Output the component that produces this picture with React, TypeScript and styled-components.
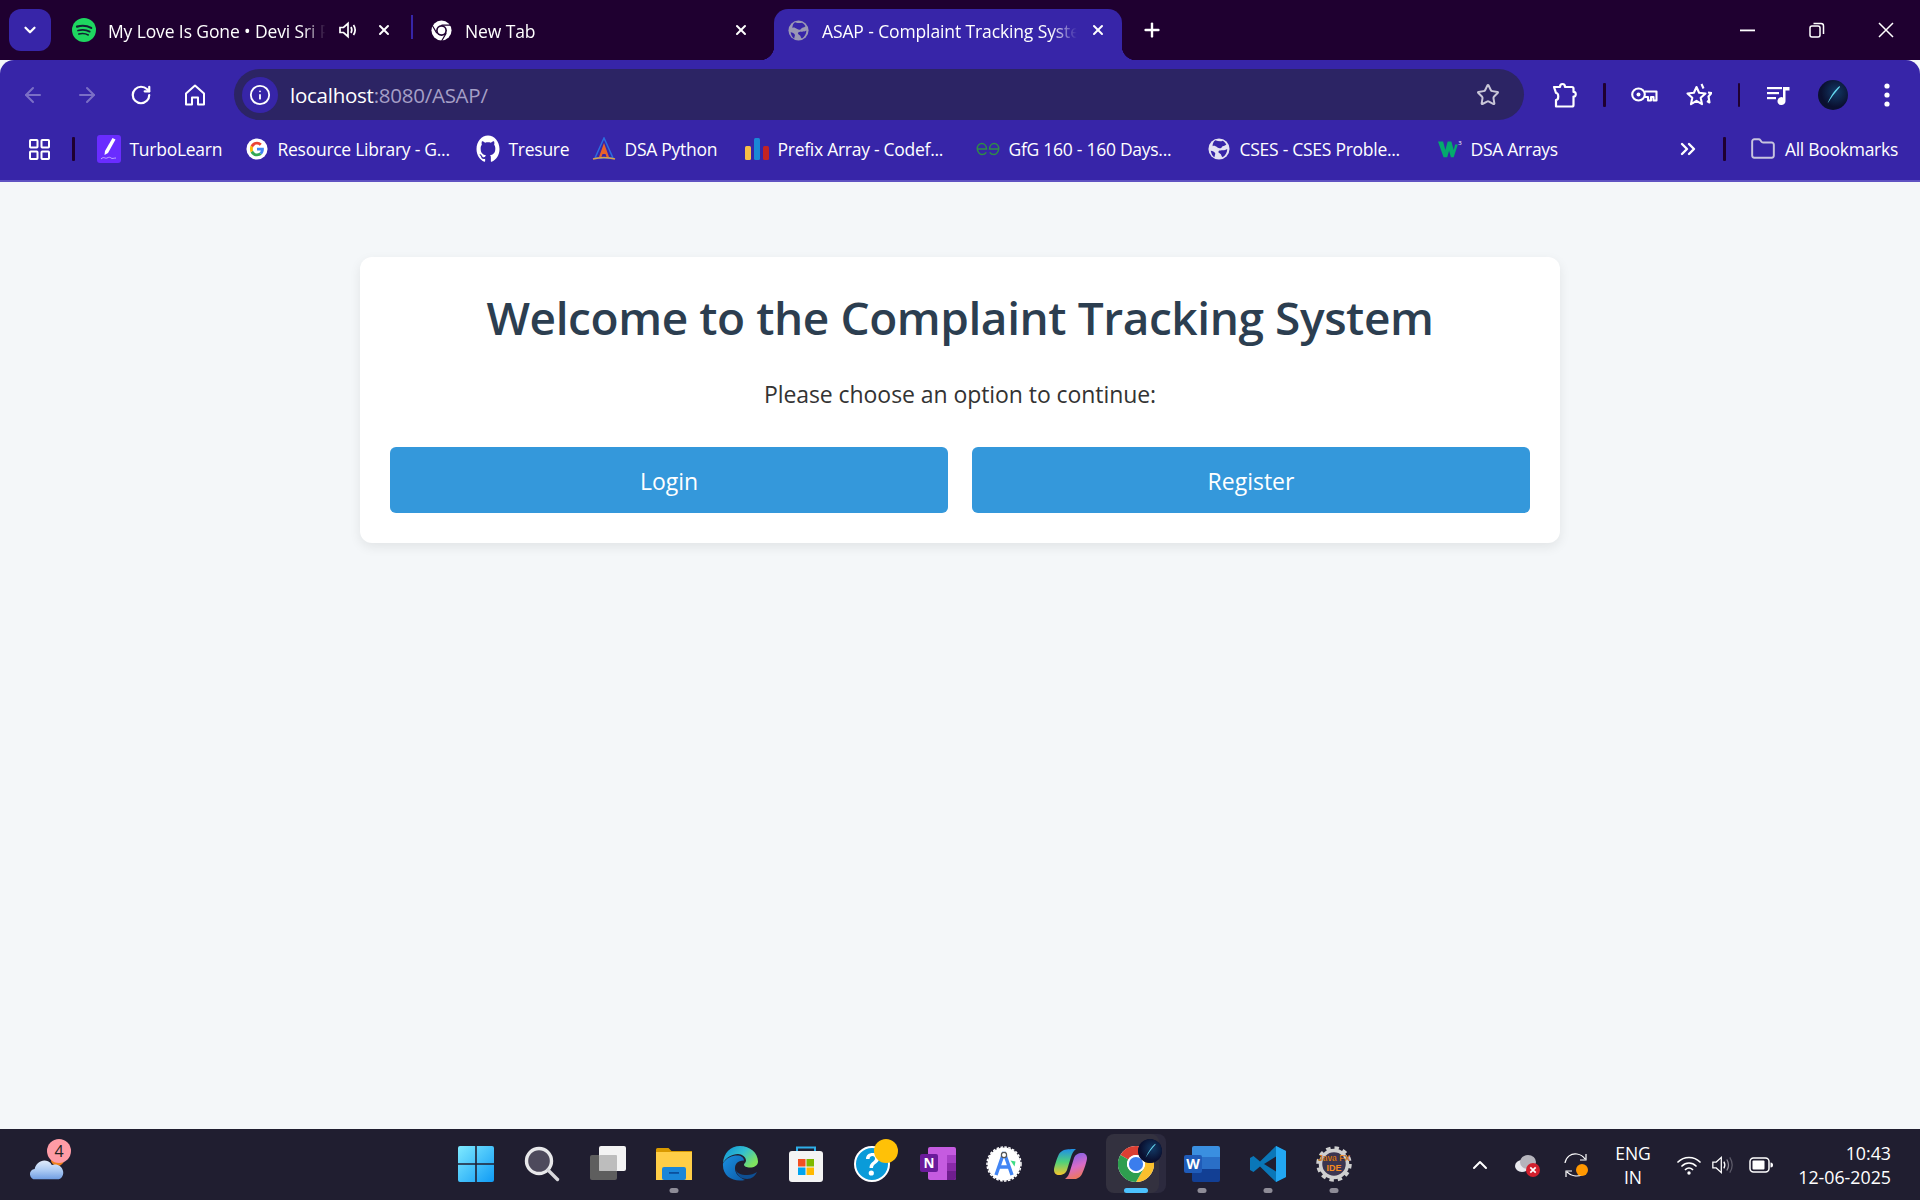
import React from "react";
import styled, { createGlobalStyle } from "styled-components";
import { ArrowLeft, ArrowRight, RotateCw, Info, Star, X, Plus, ChevronDown, ChevronUp, ChevronsRight, Folder } from "lucide-react";

const Global = createGlobalStyle`
  html, body { margin: 0; padding: 0; height: 100%; }
  body { font-family: "Open Sans", "Noto Sans", "Liberation Sans", sans-serif; background: #f4f7f9; }
  * { box-sizing: border-box; }
`;

const Shell = styled.div`display:flex;flex-direction:column;height:100vh;overflow:hidden;`;
const TabStrip = styled.div`display:flex;align-items:flex-end;height:60px;background:#1f0030;padding-left:9px;position:relative;`;
const MenuButton = styled.div`width:42px;height:42px;margin:0 9px 9px 0;border-radius:12px;background:#3725a8;color:#fff;display:flex;align-items:center;justify-content:center;`;
const Tab = styled.div<{ $active?: boolean; $pad?: number }>`
  position:relative;width:348px;height:51px;display:flex;align-items:center;padding:0 16px 9px ${p => p.$pad ?? 14}px;color:#fff;
  background:${p => (p.$active ? "#3725a8" : "transparent")};border-radius:14px 14px 0 0;
  ${p => p.$active && `margin-left:9px;
    &::before,&::after{content:"";position:absolute;bottom:0;width:14px;height:14px;}
    &::before{left:-14px;background:radial-gradient(circle at 0 0,transparent 14px,#3725a8 14.5px);}
    &::after{right:-14px;background:radial-gradient(circle at 100% 0,transparent 14px,#3725a8 14.5px);}
  `}
`;
const TabTitle = styled.span<{ $gap?: number }>`flex:1;min-width:0;margin-left:${p => p.$gap ?? 13}px;padding-top:2px;font-size:17.5px;letter-spacing:-.12px;white-space:nowrap;overflow:hidden;
  -webkit-mask-image:linear-gradient(90deg,#000 88%,transparent 98%);mask-image:linear-gradient(90deg,#000 88%,transparent 98%);`;
const TabClose = styled.span`width:16px;height:16px;display:flex;align-items:center;justify-content:center;margin-left:8px;`;
const TabAudio = styled.span`display:flex;margin:0 10px 0 8px;`;
const TabDivider = styled.span`width:2px;height:24px;margin:0 4px 21px 3px;background:#3725a8;`;
const NewTab = styled.span`width:30px;height:30px;margin:0 0 15px 15px;display:flex;align-items:center;justify-content:center;color:#fff;`;
const WindowControls = styled.div`display:flex;margin-left:auto;align-self:stretch;`;
const WindowButton = styled.span`width:69px;display:flex;align-items:center;justify-content:center;color:#fff;`;

const Toolbar = styled.div`display:flex;align-items:center;height:60px;background:#3725a8;padding:9px 6px 0;border-radius:14px 14px 0 0;position:relative;`;
const ToolCell = styled.span<{ $dim?: boolean }>`width:54px;height:40px;flex:none;display:flex;align-items:center;justify-content:center;color:${p => (p.$dim ? "#7b6fc6" : "#fff")};`;
const Omnibox = styled.div`flex:1;margin:0 13px 0 12px;height:51px;border-radius:26px;background:#2c2464;display:flex;align-items:center;padding:0 24px 0 8px;`;
const InfoChip = styled.span`width:36px;height:36px;border-radius:50%;background:#3725a8;color:#fff;display:flex;align-items:center;justify-content:center;`;
const Url = styled.span`flex:1;margin-left:12px;font-size:20.5px;letter-spacing:-.25px;color:#fff;`;
const UrlMuted = styled.span`color:#a59fc6;`;
const VBar = styled.span`width:2.5px;height:24px;flex:none;margin:0 12px;background:#1f0030;border-radius:1px;`;

const BookmarkBar = styled.div`display:flex;align-items:center;height:62px;background:#3725a8;padding:0 0 2px 27px;border-bottom:2px solid #5f52c2;color:#fff;`;
const AppsCell = styled.span`width:24px;display:flex;justify-content:center;`;
const BookmarkBarGap = styled.span`width:2.5px;height:24px;flex:none;margin:0 22px 0 21px;background:#1f0030;border-radius:1px;`;
const Bookmark = styled.div<{ $w: number }>`width:${p => p.$w}px;flex:none;display:flex;align-items:center;gap:9px;font-size:17.5px;letter-spacing:-.27px;white-space:nowrap;`;
const BookmarkIcon = styled.span`width:24px;height:24px;flex:none;display:flex;align-items:center;justify-content:center;`;
const BookmarkEnd = styled.div`margin-left:auto;display:flex;align-items:center;padding-right:22px;`;
const MoreCell = styled.span`display:flex;margin-right:2px;`;
const FolderCell = styled.span`display:flex;margin-left:2px;`;
const AllBookmarks = styled.span`font-size:17.5px;letter-spacing:-.27px;margin-left:9px;white-space:nowrap;`;

const Main = styled.main`flex:1;display:flex;justify-content:center;align-items:flex-start;padding-top:75px;background:#f4f7f9;`;
const Card = styled.section`width:1200px;padding:30px;background:#fff;border-radius:12px;box-shadow:0 4px 12px rgba(0,0,0,.08);text-align:center;`;
const Title = styled.h1`margin:0;height:62px;line-height:60px;font-size:46px;font-weight:600;letter-spacing:-.42px;color:#2c3e50;`;
const Subtitle = styled.p`margin:31px 0 37px;line-height:28px;height:30px;font-size:23px;letter-spacing:-.07px;color:#333;`;
const ButtonRow = styled.div`display:flex;gap:24px;`;
const ActionButton = styled.button`flex:1;height:66px;padding:2px 0 0;border:0;border-radius:6px;background:#3498db;color:#fff;font:400 23px "Open Sans",sans-serif;`;

const Taskbar = styled.footer`height:71px;display:flex;align-items:center;background:#201e30;color:#fff;flex:none;`;
const WeatherArea = styled.div`width:443px;flex:none;padding-left:29px;display:flex;`;
const WeatherIcon = styled.span`position:relative;width:40px;height:36px;display:block;margin-top:10px;`;
const CountBadge = styled.span`position:absolute;left:18px;top:-13px;width:24px;height:24px;border-radius:50%;background:#ff9ca6;color:#222;font-size:16px;line-height:24px;text-align:center;`;
const AppRow = styled.div`display:flex;align-items:stretch;height:71px;`;
const AppCell = styled.span`position:relative;width:66px;padding-bottom:2px;display:flex;align-items:center;justify-content:center;`;
const ActiveBack = styled.span`position:absolute;left:7px;top:5px;width:56px;height:59px;border-radius:8px;background:#2c2a3e;`;
const ActiveFront = styled.span`position:absolute;left:3px;top:5px;width:53px;height:59px;border-radius:8px;background:#33313f;`;
const AppGlyph = styled.span`position:relative;display:flex;`;
const Pill = styled.span<{ $on?: boolean }>`position:absolute;left:50%;transform:translateX(-50%);bottom:7px;height:5px;border-radius:3px;width:${p => (p.$on ? 24 : 9)}px;background:${p => (p.$on ? "#4cc2ff" : "#8e8c97")};`;
const Dot = styled.span<{ $c: string }>`position:absolute;left:35px;top:10px;width:24px;height:24px;border-radius:50%;background:${p => p.$c};overflow:hidden;display:flex;`;
const Tray = styled.div`margin-left:auto;display:flex;align-items:center;color:#fff;padding-right:29px;`;
const TrayIcon = styled.span<{ $w: number }>`width:${p => p.$w}px;display:flex;justify-content:center;flex:none;`;
const Lang = styled.div`width:66px;flex:none;text-align:center;font-size:17.5px;line-height:24px;letter-spacing:-.1px;`;
const Clock = styled.div`width:103px;flex:none;text-align:right;font-size:17.8px;line-height:24px;white-space:nowrap;`;

const Spotify = () => (<svg width="24" height="24" viewBox="0 0 24 24"><circle cx="12" cy="12" r="12" fill="#1ed760"/><g fill="none" stroke="#123" strokeLinecap="round"><path d="M5 8.600c5-1.400 10-1 14.200 1.300" strokeWidth="2.200"/><path d="M6 12.500c4-1.100 8.500-.7 11.700 1.100" strokeWidth="1.800"/><path d="M6.800 16c3.300-.8 6.800-.5 9.500 1" strokeWidth="1.500"/></g></svg>);
const ChromeMono = () => (<svg width="21" height="21" viewBox="0 0 24 24"><circle cx="12" cy="12" r="11.500" fill="#fff"/><circle cx="12" cy="12" r="6.200" fill="#1f0030"/><circle cx="12" cy="12" r="4.300" fill="#fff"/><path d="M12 5.800h10.500M6.600 15l-5.300-9M17.400 15l-5.300 9" stroke="#1f0030" strokeWidth="1.300"/></svg>);
const Globe = ({ c = "#9a98b4", l = "#3725a8", s = 21 }: { c?: string; l?: string; s?: number }) => (<svg width={s} height={s} viewBox="0 0 24 24"><circle cx="12" cy="12" r="11.500" fill={c}/><path d="M8 2.500c3 1 6 1.500 8 .5 2 1 3 2.500 4 4-2 2-4 1-5 3s-3 1-5 0-3-2-5-1c0-3 1-5 3-6.500zM12 14c2-1 6 0 9-2 0 4-2 7-5 9-2-1-1-3-3-4s-2-2-1-3zM3 14c2 0 4 1 5 3l-1 4c-2-1-3.500-4-4-7z" fill={l}/></svg>);
const Speaker = () => (<svg width="20" height="20" viewBox="0 0 20 20" fill="none" stroke="#fff" strokeWidth="1.700"><path d="M2 7.500h3.500L10 3.500v13l-4.500-4H2z"/><path d="M13 7c1 1.800 1 4.200 0 6M15.500 5c2 3 2 7 0 10"/></svg>);
const Minimize = () => (<svg width="16" height="3"><rect width="15" height="1.800" y=".5" fill="#fff"/></svg>);
const Restore = () => (<svg width="16" height="16" viewBox="0 0 16 16" fill="none" stroke="#fff" strokeWidth="1.500"><rect x="1" y="4" width="10" height="11" rx="2"/><path d="M4.500 1.500h7.500a2.500 2.500 0 0 1 2.500 2.500v8"/></svg>);
const CloseX = () => (<svg width="16" height="16" viewBox="0 0 16 16" stroke="#fff" strokeWidth="1.500"><path d="M1 1l14 14M15 1L1 15"/></svg>);
const HomeIcon = () => (<svg width="22" height="24" viewBox="0 0 22 24" fill="none" stroke="#fff" strokeWidth="2" strokeLinejoin="round"><path d="M2 10.500L11 2.500l9 8V21.500h-6v-7h-6v7H2z"/></svg>);
const PuzzleIcon = () => (<svg width="26" height="26" viewBox="0 0 26 26" fill="none" stroke="#fff" strokeWidth="2.200" strokeLinejoin="round"><path d="M3 5h6c0-4 5-4 5 0h7a1.500 1.500 0 0 1 1.500 1.500V10c3-.5 3 5 0 4.500V23a1.500 1.500 0 0 1-1.500 1.500H5V18c3 0 3-7 0-7z"/></svg>);
const KeyIcon = () => (<svg width="27" height="15" viewBox="0 0 27 15" fill="none" stroke="#fff" strokeWidth="2.100" strokeLinejoin="round"><ellipse cx="7.500" cy="7.500" rx="6.300" ry="6"/><circle cx="7.500" cy="7.500" r="2" fill="#fff" stroke="none"/><path d="M13.800 4.500H25.500v9h-3v-3.500h-2.500v3.500h-3v-3.500h-3.200"/></svg>);
const StarsIcon = () => (<svg width="26" height="26" viewBox="0 0 26 26" fill="none" stroke="#fff" strokeWidth="2.100" strokeLinejoin="round"><path d="M10.500 5l2.600 5.800 6.400.7-4.800 4.300 1.300 6.300-5.500-3.200-5.500 3.200 1.300-6.300L1.500 11.500l6.400-.7z"/><path d="M15.500 2l2 4.500M22 10.500l3.500.5-3 3.500 1 6-2.500-1.500"/></svg>);
const QueueIcon = () => (<svg width="24" height="22" viewBox="0 0 24 22" fill="#fff"><rect x="0" y="3" width="15" height="2.200"/><rect x="0" y="8" width="12" height="2.200"/><rect x="0" y="13" width="9" height="2.200"/><path d="M16 3h6.500v3.500H18.500V17a4 4 0 1 1-2.500-3.600z"/></svg>);
const Avatar = ({ s = 30 }: { s?: number }) => (<svg width={s} height={s} viewBox="0 0 30 30"><defs><radialGradient id="av" cx=".6" cy=".4"><stop offset="0" stopColor="#123a66"/><stop offset="1" stopColor="#0a1030"/></radialGradient></defs><circle cx="15" cy="15" r="15" fill="url(#av)"/><path d="M21.500 6C17 10 13 15 9.500 23.500 13 18 17 12.500 22 7z" fill="#66d9f0"/></svg>);
const Dots = () => (<svg width="6" height="24" viewBox="0 0 6 24" fill="#fff"><circle cx="3" cy="3" r="2.600"/><circle cx="3" cy="12" r="2.600"/><circle cx="3" cy="21" r="2.600"/></svg>);
const AppsIcon = () => (<svg width="21" height="21" viewBox="0 0 21 21" fill="none" stroke="#fff" strokeWidth="2"><rect x="1" y="1" width="7.500" height="7.500" rx=".7"/><rect x="12.500" y="1" width="7.500" height="7.500" rx=".7"/><rect x="1" y="12.500" width="7.500" height="7.500" rx=".7"/><rect x="12.500" y="12.500" width="7.500" height="7.500" rx=".7"/></svg>);
const Turbo = () => (<svg width="24" height="28" viewBox="0 0 24 28"><rect width="24" height="28" rx="3" fill="#6a2cff"/><path d="M15.500 3l3 1.500L11 18l-3.500 2 .5-4z" fill="#fff"/><path d="M4 24c3-3 4 0 6-1s3-1 4 0 3 0 5 0" stroke="#c9b3ff" fill="none" strokeWidth=".9"/></svg>);
const GoogleG = () => (<svg width="22" height="24" viewBox="0 0 24 24"><circle cx="12" cy="12" r="11.500" fill="#fff"/><path d="M19.500 12.200c0-.6 0-1.100-.1-1.600H12v3h4.200a3.600 3.600 0 0 1-1.600 2.400l2.500 2c1.500-1.400 2.400-3.400 2.400-5.800z" fill="#4285f4"/><path d="M12 20c2.100 0 3.900-.7 5.100-1.900l-2.500-2c-.7.500-1.600.8-2.600.8-2 0-3.700-1.400-4.300-3.200L5.100 15.700C6.400 18.300 9 20 12 20z" fill="#34a853"/><path d="M7.700 13.700c-.3-1-.3-2.400 0-3.400L5.100 8.300c-1 1.900-1 5.500 0 7.400z" fill="#fbbc05"/><path d="M12 7.200c1.100 0 2.200.4 3 1.200l2.200-2.200C15.800 4.800 13.900 4 12 4 9 4 6.400 5.700 5.100 8.300l2.600 2c.6-1.800 2.300-3.100 4.300-3.100z" fill="#ea4335"/></svg>);
const Github = () => (<svg width="24" height="28" viewBox="0 0 24 24" fill="#fff" preserveAspectRatio="none"><path d="M12 .5C5.650.5.500 5.650.500 12c0 5.080 3.290 9.390 7.860 10.910.57.110.78-.25.78-.55v-2.030c-3.200.7-3.870-1.360-3.870-1.360-.52-1.330-1.280-1.680-1.280-1.680-1.040-.71.080-.7.080-.7 1.150.08 1.760 1.180 1.760 1.180 1.030 1.750 2.690 1.250 3.340.95.100-.74.400-1.250.730-1.540-2.550-.29-5.240-1.280-5.240-5.690 0-1.260.45-2.280 1.180-3.090-.12-.29-.51-1.460.11-3.040 0 0 .97-.31 3.160 1.180.92-.26 1.900-.38 2.880-.39.98 0 1.960.13 2.880.39 2.190-1.490 3.160-1.180 3.160-1.180.62 1.580.23 2.750.11 3.040.74.810 1.180 1.830 1.180 3.090 0 4.420-2.690 5.390-5.250 5.680.41.360.78 1.050.78 2.120v3.140c0 .3.210.66.790.55C20.210 21.390 23.500 17.080 23.500 12 23.500 5.650 18.350.5 12 .5z"/></svg>);
const DsaLogo = () => (<svg width="24" height="24" viewBox="0 0 24 24"><path d="M12 1L3 21h18z" fill="none" stroke="#2b6de0" strokeWidth="1.500"/><path d="M12 6l-5 14h2.500l1-3h3l1 3H17z" fill="#e8622a"/><path d="M1 22c7-2 15-2 22 0" stroke="#d8a24a" strokeWidth="1.500" fill="none"/></svg>);
const BarsLogo = () => (<svg width="24" height="24" viewBox="0 0 24 24"><rect x="0" y="9" width="6" height="14" rx="1.500" fill="#f7bd45"/><rect x="9" y="1" width="6" height="22" rx="1.500" fill="#1a88d6"/><rect x="18" y="9" width="6" height="14" rx="1.500" fill="#c42323"/></svg>);
const Gfg = () => (<svg width="24" height="14" viewBox="0 0 24 14" fill="none" stroke="#2f8d46" strokeWidth="1.500"><path d="M1 7h9.500c0-3-2-5.500-4.700-5.500S1 4 1.300 7c.2 3 2.500 5.500 4.500 5.500s3.500-.7 4.500-2.200M23 7h-9.500c0-3 2-5.500 4.700-5.500S23 4 22.700 7c-.2 3-2.500 5.500-4.500 5.500s-3.500-.7-4.500-2.200"/></svg>);
const W3 = () => (<svg width="26" height="20" viewBox="0 0 26 20"><path d="M0 2h5.500l2.500 9 2.500-9h4l2.500 9 1.500-6 3 0-4.500 14H14l-2-7-2 7H6z" fill="#04aa6d"/><text x="22" y="6" fontSize="6.500" fill="#fff" fontFamily="Open Sans">3</text></svg>);

const StartIcon = () => (<svg width="36" height="36" viewBox="0 0 36 36"><defs><linearGradient id="st" x1="0" y1="0" x2="1" y2="1"><stop offset="0" stopColor="#7feaff"/><stop offset="1" stopColor="#0f9bf5"/></linearGradient></defs><path d="M0 2a2 2 0 0 1 2-2h15.200v17.200H0zM18.800 0H34a2 2 0 0 1 2 2v15.200H18.800zM0 18.800h17.200V36H2a2 2 0 0 1-2-2zM18.800 18.800H36V34a2 2 0 0 1-2 2H18.800z" fill="url(#st)"/></svg>);
const SearchApp = () => (<svg width="36" height="36" viewBox="0 0 36 36"><circle cx="15" cy="15" r="12.500" fill="#4e4a5c" stroke="#e8e8ea" strokeWidth="3.400"/><path d="M24 24l9.500 9.500" stroke="#d8d8dc" strokeWidth="3.400" strokeLinecap="round"/></svg>);
const TaskView = () => (<svg width="36" height="36" viewBox="0 0 36 36"><rect x="0" y="9" width="27" height="25" rx="2" fill="#5e5e5e"/><rect x="9" y="0" width="27" height="25" rx="2" fill="#f3f3f3"/><rect x="9" y="9" width="18" height="16" rx="1" fill="#bdbdbd"/></svg>);
const Explorer = () => (<svg width="36" height="32" viewBox="0 0 36 32"><path d="M0 1.500A1.500 1.500 0 0 1 1.500 0h11l3 3H36v4H0z" fill="#d99a00"/><path d="M0 4h36v28H0z" fill="#ffce47"/><rect x="6" y="19" width="24" height="13" rx="2" fill="#1a86d8"/><rect x="13" y="24" width="10" height="1.800" fill="#0b4f9c"/></svg>);
const Edge = () => (<svg width="36" height="36" viewBox="0 0 36 36"><defs><linearGradient id="e1" x1="0" y1="0" x2="1" y2=".6"><stop offset="0" stopColor="#0c8fd8"/><stop offset=".55" stopColor="#33bfcf"/><stop offset="1" stopColor="#7fe35f"/></linearGradient><linearGradient id="e2" x1="0" y1="0" x2="1" y2="1"><stop offset="0" stopColor="#1a8fe0"/><stop offset="1" stopColor="#0c5aa6"/></linearGradient></defs><path d="M18 0c10 0 18 7 18 15.500 0 4-4 6-8 6-3.500 0-6-1-6-3 0-1 2-1.500 2-4 0-3.500-4-6.500-8-6.500-6 0-12 3.500-15 9C1.500 7 8.500 0 18 0z" fill="url(#e1)"/><path d="M1 17.500c3-5.500 9-8 14-8 4 0 7 2 7 5-7 0-9 4-9 8 0 5 4 9 10 11.500C12 36.500 0 31 1 17.500z" fill="url(#e2)"/><path d="M14 23c0 6 5 10 11 10 5 0 8-3 10-7-3 2-6 3-10 3-6 0-11-2-11-6z" fill="#0e4f93"/></svg>);
const Store = () => (<svg width="36" height="36" viewBox="0 0 36 36"><path d="M9 7V1.500h18V7" fill="none" stroke="#2eaee8" strokeWidth="2"/><rect x="1" y="5" width="34" height="31" rx="3" fill="#f4f4f4"/><rect x="10" y="13" width="7.500" height="7.500" fill="#f25022"/><rect x="18.500" y="13" width="7.500" height="7.500" fill="#7fba00"/><rect x="10" y="21.500" width="7.500" height="7.500" fill="#00a4ef"/><rect x="18.500" y="21.500" width="7.500" height="7.500" fill="#ffb900"/></svg>);
const Help = () => (<svg width="36" height="36" viewBox="0 0 36 36"><circle cx="18" cy="18" r="17" fill="#0a9bd9" stroke="#fff" strokeWidth="2"/><path d="M12 13c0-4 3-6 6.500-6s6.500 2 6.500 5.500c0 5-6 5-6 9.500h-3.500c0-6 5.500-6 5.500-9.500 0-1.500-1-2.500-2.500-2.500S15.500 11 15.500 13z" fill="#fff"/><circle cx="17.300" cy="27" r="2.600" fill="#fff"/></svg>);
const OneNote = () => (<svg width="36" height="33" viewBox="0 0 36 33"><path d="M8 2a2 2 0 0 1 2-2h24a2 2 0 0 1 2 2v29a2 2 0 0 1-2 2H10a2 2 0 0 1-2-2z" fill="#c55be0"/><rect x="27" y="8" width="9" height="8" fill="#a63fc5"/><rect x="27" y="16" width="9" height="8" fill="#8a2aa8"/><path d="M27 24h9v7a2 2 0 0 1-2 2h-7z" fill="#6f1e8e"/><rect x="0" y="7" width="18" height="18" rx="2" fill="#6a1b9a"/><text x="9" y="21" fontSize="13.500" fontWeight="700" textAnchor="middle" fill="#fff" fontFamily="Open Sans">N</text></svg>);
const AndroidStudio = () => (<svg width="36" height="36" viewBox="0 0 36 36"><circle cx="18" cy="18" r="16.500" fill="#fff"/><circle cx="18" cy="18" r="17" fill="none" stroke="#fff" strokeWidth="1.500" strokeDasharray="2.500 1.500"/><path d="M18 6l-8 23M18 6l8 23M12 21h12" stroke="#4285f4" strokeWidth="3.400" fill="none"/><circle cx="18" cy="9" r="2.600" fill="#fff" stroke="#555" strokeWidth="1.200"/><path d="M24.500 14.500l5 1-1 5z" fill="#3ddc84"/></svg>);
const Copilot = () => (<svg width="33" height="30" viewBox="0 0 33 30"><defs><linearGradient id="c1" x1=".3" y1="0" x2=".3" y2="1"><stop offset="0" stopColor="#1f8fe8"/><stop offset=".5" stopColor="#4fd17a"/><stop offset="1" stopColor="#f5c52c"/></linearGradient><linearGradient id="c2" x1=".4" y1="0" x2=".7" y2="1"><stop offset="0" stopColor="#7e62e6"/><stop offset=".5" stopColor="#d86bc9"/><stop offset="1" stopColor="#f07a4a"/></linearGradient></defs><path d="M10 1C12 0 20 0 22 0 19 2 18 5 17 8L13 21C12 24 9 26 5 26 2 26 0 24 0 21 0 18 3 9 5 5 6 3 8 2 10 1Z" fill="url(#c1)"/><path d="M22 30C20 30 13 30 11 30 14 28 15 25 16 22L20 9C21 6 24 4 28 4 31 4 33 6 33 9 33 12 30 21 28 25 27 27 25 29 22 30Z" fill="url(#c2)"/></svg>);
const ChromeApp = () => (<svg width="36" height="36" viewBox="0 0 48 48"><circle cx="24" cy="24" r="24" fill="#fff"/><path d="M24 0A24 24 0 0 1 44.800 12H24A12 12 0 0 0 13.600 18L3.200 12A24 24 0 0 1 24 0" fill="#db3f32"/><path d="M44.800 12A24 24 0 0 1 24 48L34.400 30A12 12 0 0 0 24 12Z" fill="#fbc02d"/><path d="M24 48A24 24 0 0 1 3.200 12L13.600 18A12 12 0 0 0 34.400 30Z" fill="#2e9e4f"/><circle cx="24" cy="24" r="12" fill="#fff"/><circle cx="24" cy="24" r="9.500" fill="#3b7ded"/></svg>);
const WordIcon = () => (<svg width="36" height="36" viewBox="0 0 36 36"><path d="M8 2a2 2 0 0 1 2-2h24a2 2 0 0 1 2 2v9H8z" fill="#3a8fe0"/><rect x="8" y="11" width="28" height="12" fill="#2a6fc7"/><path d="M8 23h28v11a2 2 0 0 1-2 2H10a2 2 0 0 1-2-2z" fill="#123f94"/><rect x="0" y="9" width="18" height="18" rx="2" fill="#1f5bb8"/><text x="9" y="23" fontSize="14" fontWeight="700" textAnchor="middle" fill="#fff" fontFamily="Open Sans">W</text></svg>);
const VSCode = () => (<svg width="36" height="36" viewBox="0 0 36 36"><path d="M26 0l10 5v26l-10 5L10 20.500 3.500 26 0 24V12l3.500-2L10 15.500z" fill="#0a77b8"/><path d="M26 0l10 5v26l-10 5z" fill="#22a7f2"/><path d="M26 10.500L14 18l12 7.500z" fill="#201e30"/></svg>);
const JavaGear = () => (<svg width="36" height="36" viewBox="0 0 36 36"><circle cx="18" cy="18" r="14" fill="#3b3550"/><circle cx="18" cy="18" r="13.500" fill="none" stroke="#cfcfcf" strokeWidth="3.500"/><circle cx="18" cy="18" r="16" fill="none" stroke="#cfcfcf" strokeWidth="3.500" strokeDasharray="4.400 3.980"/><text x="18" y="15" fontSize="8.500" fontWeight="700" textAnchor="middle" fill="#f58a1f" stroke="#1a1008" strokeWidth=".2" fontFamily="Liberation Sans">Java FX</text><text x="18" y="25" fontSize="9" fontWeight="700" textAnchor="middle" fill="#f58a1f" fontFamily="Liberation Sans">IDE</text></svg>);
const Cloud = () => (<svg width="38" height="30" viewBox="0 0 40 30"><defs><linearGradient id="cl" x1="0" y1="0" x2="0" y2="1"><stop offset="0" stopColor="#e2ecfb"/><stop offset=".55" stopColor="#a9c8f2"/><stop offset="1" stopColor="#6f9de2"/></linearGradient></defs><circle cx="30" cy="7" r="7" fill="#ef7f1a"/><path d="M7 28a5.500 5.500 0 0 1-1-11c1-6 8-11 14-8 2 1 3 2 4 4 4-2 11 0 12 7 .5 4-2 8-6 8z" fill="url(#cl)"/></svg>);
const CloudOff = () => (<svg width="26" height="24" viewBox="0 0 26 24"><ellipse cx="7" cy="13" rx="7" ry="6" fill="#e9e9ee"/><ellipse cx="13" cy="9" rx="8" ry="7" fill="#b5b4bc"/><circle cx="18" cy="17" r="7" fill="#d21f2d"/><path d="M15.300 14.300l5.400 5.400M20.700 14.300l-5.400 5.400" stroke="#fff" strokeWidth="1.700"/></svg>);
const SyncIcon = () => (<svg width="26" height="26" viewBox="0 0 26 26" fill="none" stroke="#fff" strokeWidth="1.200"><path d="M2 11C3 5 8 1 14 2c3 .5 6 2 8 5M23 2v6h-6"/><path d="M19 23c-5 2-11 1-15-3M3 25v-6h6"/><circle cx="19" cy="18" r="6" fill="#ff9800" stroke="none"/></svg>);
const WifiIcon = () => (<svg width="24" height="20" viewBox="0 0 24 20" fill="none" stroke="#fff" strokeWidth="1.700" strokeLinecap="round"><path d="M1 7c6-6 16-6 22 0M5 11c4-4 10-4 14 0M8.500 14.500c2-2 5-2 7 0"/><circle cx="12" cy="18" r="1.700" fill="#fff" stroke="none"/></svg>);
const VolumeIcon = () => (<svg width="26" height="22" viewBox="0 0 26 22" fill="none" stroke="#fff" strokeWidth="1.500"><path d="M1 7.500h4L11 2v18l-6-5.500H1z"/><path d="M14 7c1.500 2.500 1.500 5.500 0 8"/><path d="M17.500 4.500c2.500 4 2.500 9 0 13" stroke="#8e8c97"/><path d="M21 2c3.500 5.500 3.500 12.500 0 18" stroke="#5c5a68"/></svg>);
const BatteryIcon = () => (<svg width="24" height="16" viewBox="0 0 24 16"><rect x="1" y="1" width="19" height="14" rx="3.500" fill="none" stroke="#fff" strokeWidth="1.500"/><rect x="3.500" y="3.500" width="12" height="9" rx="1" fill="#fff"/><path d="M21.500 5.500a2.500 2.500 0 0 1 0 5z" fill="#fff"/></svg>);

const bookmarks: [number, React.ReactNode, string][] = [
  [148, <Turbo />, "TurboLearn"],
  [231, <GoogleG />, "Resource Library - G..."],
  [116, <Github />, "Tresure"],
  [153, <DsaLogo />, "DSA Python"],
  [231, <BarsLogo />, "Prefix Array - Codef..."],
  [231, <Gfg />, "GfG 160 - 160 Days..."],
  [231, <Globe c="#e4e2f2" s={22} />, "CSES - CSES Proble..."],
  [121, <W3 />, "DSA Arrays"],
];

export default function App() {
  return (
    <Shell>
      <Global />
      <TabStrip>
        <MenuButton><ChevronDown size={18} strokeWidth={3} /></MenuButton>
        <Tab $pad={12}>
          <Spotify />
          <TabTitle $gap={12}>My Love Is Gone • Devi Sri Prasad</TabTitle>
          <TabAudio><Speaker /></TabAudio>
          <TabClose><X size={18} strokeWidth={3} /></TabClose>
        </Tab>
        <TabDivider />
        <Tab>
          <ChromeMono />
          <TabTitle>New Tab</TabTitle>
          <TabClose><X size={18} strokeWidth={3} /></TabClose>
        </Tab>
        <Tab $active>
          <Globe />
          <TabTitle>ASAP - Complaint Tracking System</TabTitle>
          <TabClose><X size={18} strokeWidth={3} /></TabClose>
        </Tab>
        <NewTab><Plus size={22} strokeWidth={2.6} /></NewTab>
        <WindowControls>
          <WindowButton><Minimize /></WindowButton>
          <WindowButton><Restore /></WindowButton>
          <WindowButton><CloseX /></WindowButton>
        </WindowControls>
      </TabStrip>
      <Toolbar>
        <ToolCell $dim><ArrowLeft size={24} strokeWidth={2} /></ToolCell>
        <ToolCell $dim><ArrowRight size={24} strokeWidth={2} /></ToolCell>
        <ToolCell><RotateCw size={22} strokeWidth={2.4} /></ToolCell>
        <ToolCell><HomeIcon /></ToolCell>
        <Omnibox>
          <InfoChip><Info size={22} strokeWidth={2} /></InfoChip>
          <Url>localhost<UrlMuted>:8080/ASAP/</UrlMuted></Url>
          <Star size={24} strokeWidth={2} color="#c9c6d8" />
        </Omnibox>
        <ToolCell><PuzzleIcon /></ToolCell>
        <VBar />
        <ToolCell><KeyIcon /></ToolCell>
        <ToolCell><StarsIcon /></ToolCell>
        <VBar />
        <ToolCell><QueueIcon /></ToolCell>
        <ToolCell><Avatar /></ToolCell>
        <ToolCell><Dots /></ToolCell>
      </Toolbar>
      <BookmarkBar>
        <AppsCell><AppsIcon /></AppsCell>
        <BookmarkBarGap />
        {bookmarks.map(([w, icon, label]) => (
          <Bookmark key={label} $w={w}><BookmarkIcon>{icon}</BookmarkIcon>{label}</Bookmark>
        ))}
        <BookmarkEnd>
          <MoreCell><ChevronsRight size={24} strokeWidth={2.4} /></MoreCell>
          <BookmarkBarGap />
          <FolderCell><Folder size={26} color="#c8c4de" strokeWidth={1.8} /></FolderCell>
          <AllBookmarks>All Bookmarks</AllBookmarks>
        </BookmarkEnd>
      </BookmarkBar>
      <Main>
        <Card>
          <Title>Welcome to the Complaint Tracking System</Title>
          <Subtitle>Please choose an option to continue:</Subtitle>
          <ButtonRow>
            <ActionButton>Login</ActionButton>
            <ActionButton>Register</ActionButton>
          </ButtonRow>
        </Card>
      </Main>
      <Taskbar>
        <WeatherArea>
          <WeatherIcon><Cloud /><CountBadge>4</CountBadge></WeatherIcon>
        </WeatherArea>
        <AppRow>
          <AppCell><StartIcon /></AppCell>
          <AppCell><SearchApp /></AppCell>
          <AppCell><TaskView /></AppCell>
          <AppCell><Explorer /><Pill /></AppCell>
          <AppCell><Edge /></AppCell>
          <AppCell><Store /></AppCell>
          <AppCell><Help /><Dot $c="#ffc107" /></AppCell>
          <AppCell><OneNote /></AppCell>
          <AppCell><AndroidStudio /></AppCell>
          <AppCell><Copilot /></AppCell>
          <AppCell><ActiveBack /><ActiveFront /><AppGlyph><ChromeApp /></AppGlyph><Dot $c="#0a1030"><Avatar s={24} /></Dot><Pill $on /></AppCell>
          <AppCell><WordIcon /><Pill /></AppCell>
          <AppCell><VSCode /><Pill /></AppCell>
          <AppCell><JavaGear /><Pill /></AppCell>
        </AppRow>
        <Tray>
          <TrayIcon $w={48}><ChevronUp size={24} strokeWidth={2} /></TrayIcon>
          <TrayIcon $w={48}><CloudOff /></TrayIcon>
          <TrayIcon $w={48}><SyncIcon /></TrayIcon>
          <Lang>ENG<br />IN</Lang>
          <TrayIcon $w={46}><WifiIcon /></TrayIcon>
          <TrayIcon $w={22}><VolumeIcon /></TrayIcon>
          <TrayIcon $w={54}><BatteryIcon /></TrayIcon>
          <Clock>10:43<br />12-06-2025</Clock>
        </Tray>
      </Taskbar>
    </Shell>
  );
}
